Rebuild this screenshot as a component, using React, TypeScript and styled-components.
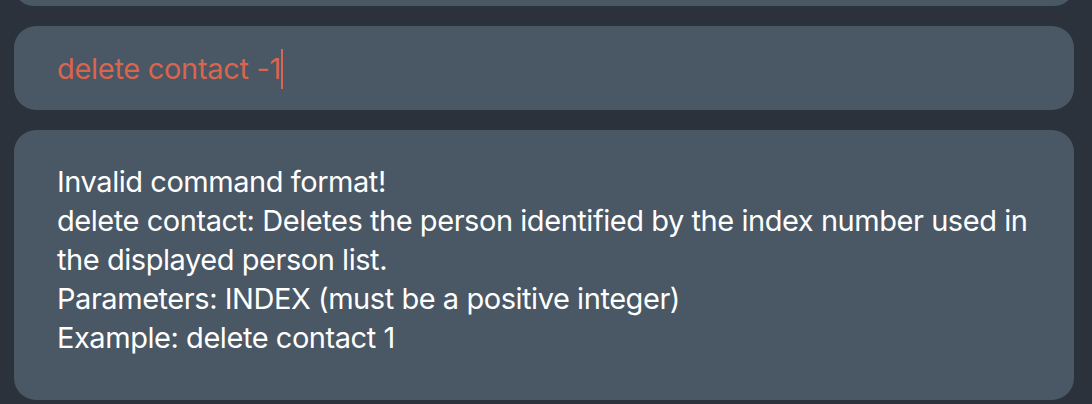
import React from "react";
import styled, { createGlobalStyle } from "styled-components";

const Global = createGlobalStyle`
  html, body { margin: 0; padding: 0; background: #2b323c; }
  body { width: 1092px; height: 404px; overflow: hidden; }
`;

const Page = styled.div`
  display: flex;
  flex-direction: column;
  gap: 20px;
  padding: 0 18px 0 14px;
  font-family: Inter, "Noto Sans", sans-serif;
`;

const Panel = styled.div<{ $h: number }>`
  background: #4a5764;
  border-radius: 22px;
  height: ${(p) => p.$h}px;
  box-sizing: border-box;
`;

const TopPanel = styled(Panel)`
  margin-top: -34px;
`;

const CommandBox = styled(Panel)`
  display: flex;
  align-items: center;
  padding: 1px 43px 0;
`;

const CommandText = styled.div`
  display: flex;
  align-items: center;
  color: #d9654f;
  font-size: 29px;
  letter-spacing: -0.3px;
  line-height: 40px;
`;

const Caret = styled.span`
  width: 1.5px;
  height: 40px;
  background: #d9654f;
  margin-left: 0;
`;

const ResultBox = styled(Panel)`
  padding: 32px 43px 0 43px;
`;

const ResultText = styled.div`
  color: #ffffff;
  font-size: 29px;
  line-height: 39px;
  letter-spacing: -0.45px;
  white-space: pre-wrap;
`;

const message = `Invalid command format!
delete contact: Deletes the person identified by the index number used in the displayed person list.
Parameters: INDEX (must be a positive integer)
Example: delete contact 1`;

export default function App() {
  return (
    <>
      <Global />
      <Page>
        <TopPanel $h={40} />
        <CommandBox $h={84}>
          <CommandText>
            delete contact -1
            <Caret />
          </CommandText>
        </CommandBox>
        <ResultBox $h={270}>
          <ResultText>{message}</ResultText>
        </ResultBox>
      </Page>
    </>
  );
}
